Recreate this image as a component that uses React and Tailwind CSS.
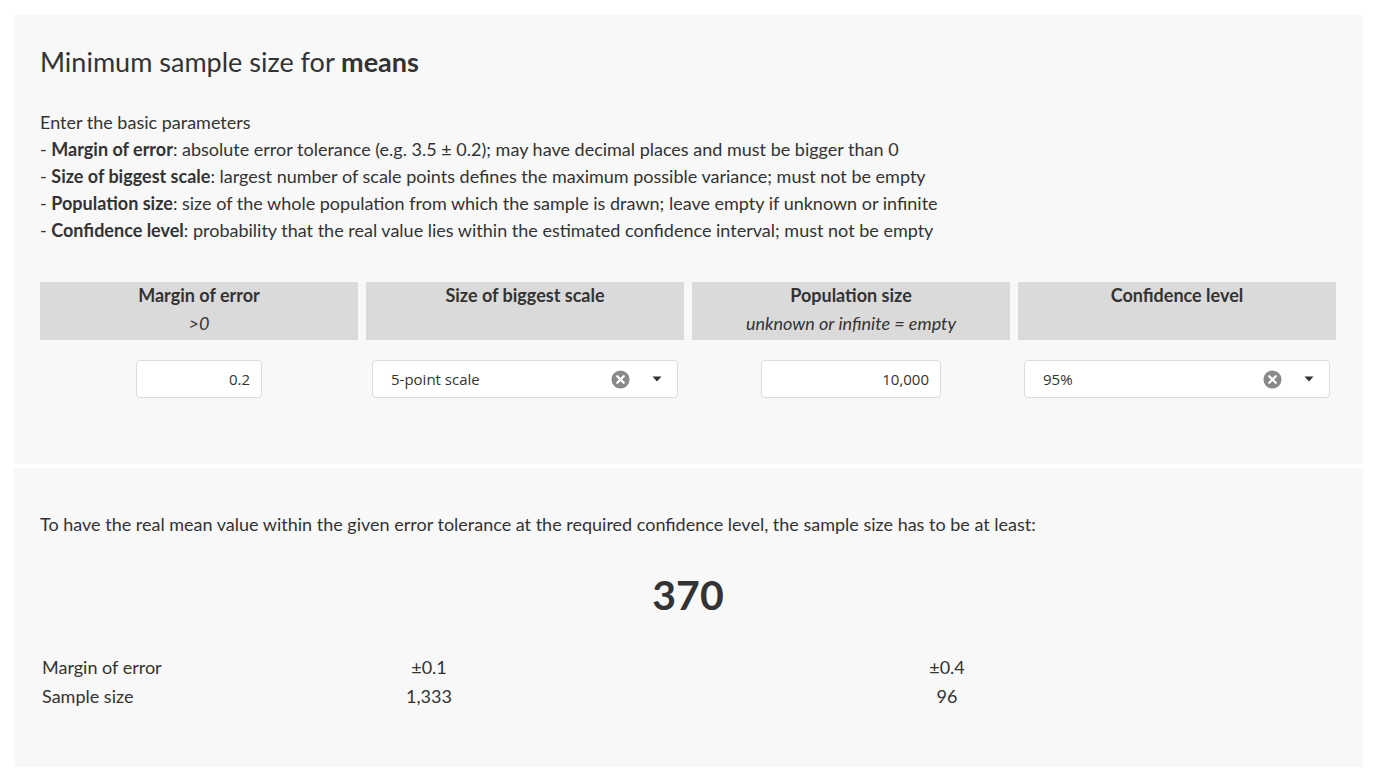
import React from "react";

const lato = { fontFamily: "Lato, 'Open Sans', sans-serif" };
const inputFont = { fontFamily: "'Open Sans', 'Noto Sans', sans-serif" };

function ClearIcon() {
  return (
    <svg width="19" height="19" viewBox="0 0 20 20" className="shrink-0">
      <circle cx="10" cy="10" r="9.5" fill="#8a8a8a" />
      <path d="M6.6 6.6 L13.4 13.4 M13.4 6.6 L6.6 13.4" stroke="#fff" strokeWidth="2.4" strokeLinecap="round" />
    </svg>
  );
}

function Caret() {
  return (
    <svg width="10" height="6" viewBox="0 0 10 6" className="shrink-0">
      <path d="M0.5 0.5 L9.5 0.5 L5 5.5 Z" fill="#333" />
    </svg>
  );
}

function Select({ value }) {
  return (
    <div className="flex h-[38px] w-full items-center rounded-[4px] border border-[#dcdcdc] bg-white pl-[18px] pr-[15px] text-[15px] text-[#333]" style={inputFont}>
      <span className="flex-1">{value}</span>
      <ClearIcon />
      <span className="ml-[22px] flex items-center">
        <Caret />
      </span>
    </div>
  );
}

function NumberBox({ value, width }) {
  return (
    <div className={`flex h-[38px] ${width} items-center justify-end rounded-[4px] border border-[#dcdcdc] bg-white pr-[11px] text-[15px] text-[#333]`} style={inputFont}>
      {value}
    </div>
  );
}

function Header({ title, sub }) {
  return (
    <div className="flex h-[58px] flex-col items-center bg-[#dadada] text-[#333]">
      <div className="text-[18px] font-bold leading-[26px]">{title}</div>
      {sub ? <div className="mt-[2px] text-[18px] italic leading-[26px]">{sub}</div> : null}
    </div>
  );
}

export default function App() {
  return (
    <div className="min-h-[782px] bg-white pt-[15px] text-[#333]" style={lato}>
      <div className="ml-[14px] mr-[16px] flex flex-col gap-[4px]">
        <section className="bg-[#f8f8f8] px-[26px] pb-[66px] pt-[29px]">
          <h1 className="text-[27px] font-normal leading-[36px] text-[#333]">
            Minimum sample size for <b className="font-bold">means</b>
          </h1>
          <div className="mt-[29px] text-[18px] leading-[27px]">
            <p>Enter the basic parameters</p>
            <p>- <b>Margin of error</b>: absolute error tolerance (e.g. 3.5 ± 0.2); may have decimal places and must be bigger than 0</p>
            <p>- <b>Size of biggest scale</b>: largest number of scale points defines the maximum possible variance; must not be empty</p>
            <p>- <b>Population size</b>: size of the whole population from which the sample is drawn; leave empty if unknown or infinite</p>
            <p>- <b>Confidence level</b>: probability that the real value lies within the estimated confidence interval; must not be empty</p>
          </div>
          <div className="mt-[38px] grid w-[1296px] grid-cols-4 gap-x-[8px] gap-y-[20px]">
            <Header title="Margin of error" sub=">0" />
            <Header title="Size of biggest scale" />
            <Header title="Population size" sub="unknown or infinite = empty" />
            <Header title="Confidence level" />
            <div className="flex justify-center">
              <NumberBox value="0.2" width="w-[126px]" />
            </div>
            <div className="px-[6px]">
              <Select value="5-point scale" />
            </div>
            <div className="flex justify-center">
              <NumberBox value="10,000" width="w-[180px]" />
            </div>
            <div className="px-[6px]">
              <Select value="95%" />
            </div>
          </div>
        </section>
        <section className="bg-[#f8f8f8] px-[26px] pb-[56px] pt-[43px]">
          <p className="text-[18px] leading-[27px]">
            To have the real mean value within the given error tolerance at the required confidence level, the sample size has to be at least:
          </p>
          <div className="mt-[33px] w-[1296px] text-center text-[41px] font-bold leading-[48px]">370</div>
          <div className="mt-[34px] grid grid-cols-[170px_438px_598px] text-[18px] leading-[29px]">
            <div className="pl-[2px]">Margin of error</div>
            <div className="text-center">±0.1</div>
            <div className="text-center">±0.4</div>
            <div className="pl-[2px]">Sample size</div>
            <div className="text-center">1,333</div>
            <div className="text-center">96</div>
          </div>
        </section>
      </div>
    </div>
  );
}
